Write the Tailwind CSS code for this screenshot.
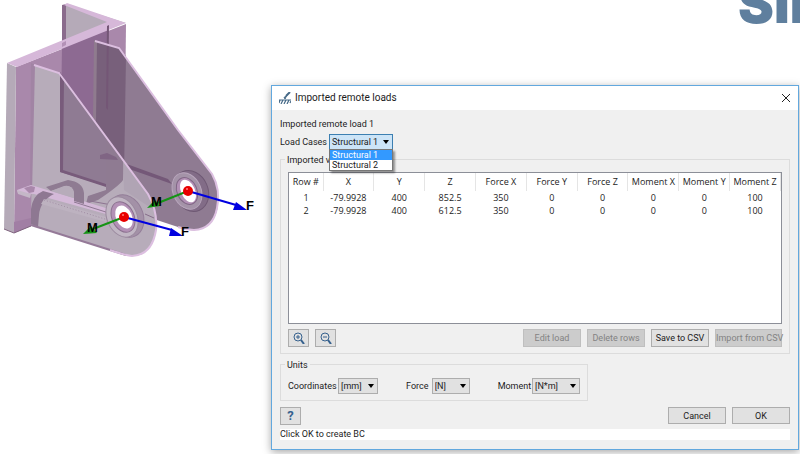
<!DOCTYPE html>
<html lang="en">
<head>
    <meta charset="UTF-8">
    <meta name="viewport" content="width=device-width, initial-scale=1.0">
    <title>Imported remote loads</title>
    <script src="https://cdn.jsdelivr.net/npm/@tailwindcss/browser@4"></script>
</head>
<body class="relative min-h-screen overflow-hidden bg-white font-['Roboto','Noto_Sans',sans-serif] text-[9px] leading-3 text-[#1c1c1c]">

    <!-- Viewport: bracket model -->
    <main>
        <svg class="block h-[264px] w-[264px]" viewBox="0 0 264 264" role="img" aria-label="Bracket with remote loads">
            <!-- back plates -->
            <path d="M66 4L126 23L107 25L66 41Z" fill="#b5aab8"/>
            <path d="M16 67L126 24L125 110L106 186L31 226L14 233Z" fill="#a988ab"/>
            <path d="M62 47L108 27L107 186L60 171Z" fill="#8d6a92"/>
            <path d="M7 63L16 67L14 233L4 229Z" fill="#b5aab8"/>
            <path d="M14 233L31 226L31 218L14 222Z" fill="#a17ea4"/>
            <path d="M4 229L14 233L31 226" fill="none" stroke="#80647f"/>
            <path d="M62 5L66 4L66 45L62 47Z" fill="#8a6b8c"/>
            <path d="M7 63L107 22L64 5L67 3L126 23L17 67Z" fill="#d6b8d9"/>
            <path d="M62 43L66 41L66 45L62 47Z" fill="#b391b6"/>

            <!-- rear gusset -->
            <path d="M95 40L119 48L178 130L212 174Q220 190 218 206Q214 229 195 230Q188 231 178 227L96 200Z" fill="#8f7b92"/>
            <path d="M96 41L119 48L126 56L124 176L96 183Z" fill="#78607b"/>
            <path d="M94 40L97 42L96 120L93 118Z" fill="#8f7b8e"/>
            <path d="M107 26L109 25L108 110L106 108Z" fill="#745676"/>
            <path d="M95 41L119 48L178 130L212 174Q221 190 217 208Q213 229 194 230Q186 230 178 227" fill="none" stroke="#dcbfe0" stroke-width="2"/>
            <path d="M97 154L124 163L168 179L172 184L98 158Z" fill="#745878"/>

            <!-- front gusset -->
            <path d="M33 65L59 73L148 194Q158 212 156 228Q152 255 132 256Q126 256 31 225Z" fill="#b7acba"/>
            <path d="M62 76L106 137L106 186L60 172Z" fill="#8f7b93"/>
            <path d="M106 137L124 161L123 180Q119 186 98 200L86 204L88 196L106 190Z" fill="#8f7b92"/>
            <path d="M60 72L64 78L63 170L106 184L106 187L60 172Z" fill="#785b7b"/>
            <path d="M100 155L107 153L116 157L118 160L100 159Z" fill="#806584"/>
            <path d="M31 63L35 65L32 193L30 193Z" fill="#a184a4"/>
            <path d="M123 160L149 196L154 210L124 190Z" fill="#b0a4b4"/>

            <!-- foot and cross tube -->
            <path d="M17 190L31 185L109 209L106 214L34 194L18 193Z" fill="#d4b9d8"/>
            <path d="M17 190L31 194L30 198L18 194Z" fill="#c4b7c7"/>
            <path d="M24 188L31 186L35 187L34 192L29 193Z" fill="#a988ab"/>
            <path d="M46 187L68 180Q83 182 84 193L84 204L74 201L74 193Q72 184 64 186L51 191Z" fill="#8f7b92"/>
            <path d="M51 191L66 186Q73 186 74 192L74 198Z" fill="#b7acba"/>
            <path d="M31 209Q33 195 43 191L54 194Q40 201 39 215L38 227L31 224Z" fill="#8e7892"/>
            <path d="M44 199L106 217L106 222L41 204Z" fill="#bdb2c0"/>
            <path d="M44 200L108 220" stroke="#a18da4" stroke-dasharray="1 2"/>
            <path d="M74 202L109 213" stroke="#8f7893"/>
            <path d="M90 201L112 205" stroke="#8d7491"/>
            <path d="M31 225L126 255" stroke="#957a98" stroke-width="2"/>
            <path d="M34 65L59 73L148 194Q158 212 156 230Q152 255 132 256Q128 256 110 250" fill="none" stroke="#dcbfe0" stroke-width="2"/>
            <path d="M145 214L154 218" stroke="#866d8a"/>

            <!-- bosses -->
            <g fill="none">
                <ellipse cx="191" cy="191" rx="17" ry="21" transform="rotate(-24 191 191)" fill="#826c87" stroke="#6f5974"/>
                <ellipse cx="187" cy="191" rx="14" ry="19" transform="rotate(-24 187 191)" fill="#a493a8" stroke="#b9a6bd"/>
                <ellipse cx="187" cy="191" rx="10" ry="14" transform="rotate(-24 187 191)" fill="#b391b6" stroke="#806685"/>
                <ellipse cx="188" cy="191" rx="7" ry="12" transform="rotate(-24 188 191)" fill="#fff"/>
                <ellipse cx="126" cy="216" rx="17" ry="22" transform="rotate(-24 126 216)" fill="#a391a7" stroke="#937d98"/>
                <ellipse cx="122" cy="217" rx="15" ry="21" transform="rotate(-24 122 217)" fill="#c1b6c4" stroke="#9b8a9f"/>
                <ellipse cx="123" cy="217" rx="11" ry="16" transform="rotate(-24 123 217)" fill="#b391b6" stroke="#8c7190"/>
                <ellipse cx="124" cy="217" rx="8" ry="12" transform="rotate(-24 124 217)" fill="#fff"/>
            </g>

            <!-- moment and force arrows -->
            <g stroke-width="2">
                <path d="M188 191L158 203" stroke="#159315"/>
                <path d="M147 208L155 200L160 206Z" fill="#159315"/>
                <path d="M188 191L236 205" stroke="#0000e0"/>
                <path d="M236 202L247 210L233 210Z" fill="#0000e0"/>
                <path d="M124 217L93 229" stroke="#159315"/>
                <path d="M83 234L91 226L97 233Z" fill="#159315"/>
                <path d="M124 217L172 230" stroke="#0000e0"/>
                <path d="M171 228L183 236L169 236Z" fill="#0000e0"/>
            </g>
            <g fill="#e80000">
                <circle cx="188" cy="191" r="5"/>
                <circle cx="124" cy="217" r="5"/>
            </g>
            <g fill="#ff7d7d">
                <circle cx="187" cy="189" r="1"/>
                <circle cx="123" cy="215" r="1"/>
            </g>
            <g class="font-['Liberation_Sans',sans-serif] text-[13px] font-bold" fill="#000">
                <text x="151" y="206">M</text>
                <text x="87" y="232">M</text>
                <text x="246" y="210">F</text>
                <text x="181" y="236">F</text>
            </g>
        </svg>
    </main>

    <!-- Brand, runs off the corner -->
    <div class="absolute -top-7 left-[738px] font-['Inter',sans-serif] text-[54px] leading-[64px] font-black text-[#5f7f9e]">SIM</div>

    <!-- Dialog -->
    <section role="dialog" aria-labelledby="dialog-title" class="absolute top-[85px] right-px left-[271px] border border-[#62a8de] bg-[#f0f0f0] shadow-[0_2px_8px_rgba(0,0,0,0.35)]">
        <header class="flex h-6 items-center bg-white pr-2 pl-[7px]">
            <svg class="h-3 w-3" viewBox="0 0 12 12" fill="none" stroke="#456987">
                <path d="M11 0L7 4" stroke-width="2"/>
                <path d="M8 3L6 7L5 5" fill="#456987"/>
                <path d="M0 8H12M1 8L0 11M4 8L2 12M7 8L5 12M10 8L8 12M12 9L11 11" stroke-width="1.2"/>
            </svg>
            <h1 id="dialog-title" class="ml-1 text-[10px]">Imported remote loads</h1>
            <button type="button" aria-label="Close" class="ml-auto">
                <svg class="h-2 w-2" viewBox="0 0 8 8" stroke="#222"><path d="M0 0L8 8M8 0L0 8"/></svg>
            </button>
        </header>

        <div class="px-2 pt-2 pb-[9px]">
            <p>Imported remote load 1</p>

            <div class="mt-1 flex items-center">
                <label for="load-case" class="w-[49px] whitespace-nowrap">Load Cases</label>
                <div class="relative">
                    <select id="load-case" class="block h-4 w-16 appearance-none border border-[#3c7fb1] bg-[#cce4f7] pl-[2px]">
                        <option>Structural 1</option>
                        <option>Structural 2</option>
                    </select>
                    <svg class="pointer-events-none absolute top-[6px] right-1 h-1 w-[6px]" viewBox="0 0 6 4"><path d="M0 0H6L3 4Z"/></svg>
                    <ul class="absolute top-[15px] left-0 z-10 w-16 border border-[#777] bg-white leading-[10px] shadow-[2px_2px_2px_rgba(0,0,0,0.4)]">
                        <li class="bg-[#3399ff] pl-[2px] text-white">Structural 1</li>
                        <li class="pl-[2px]">Structural 2</li>
                    </ul>
                </div>
            </div>

            <section class="relative mt-[9px] border border-[#dcdcdc] px-[7px] pt-3 pb-[6px]">
                <h2 class="absolute -top-[6px] left-1 bg-[#f0f0f0] px-[2px]">Imported values</h2>
                <div class="h-[152px] border border-[#8c8f98] bg-white">
                    <table class="w-full table-fixed text-center font-['Open_Sans','Noto_Sans',sans-serif]">
                        <thead>
                            <tr class="h-[18px] *:border-r *:border-[#e5e5e5] *:p-0 *:font-normal *:whitespace-nowrap">
                                <th class="w-[34px]">Row #</th>
                                <th>X</th>
                                <th>Y</th>
                                <th>Z</th>
                                <th>Force X</th>
                                <th>Force Y</th>
                                <th>Force Z</th>
                                <th>Moment X</th>
                                <th>Moment Y</th>
                                <th>Moment Z</th>
                            </tr>
                        </thead>
                        <tbody>
                            <tr class="h-[13px]"><td>1</td><td>-79.9928</td><td>400</td><td>852.5</td><td>350</td><td>0</td><td>0</td><td>0</td><td>0</td><td>100</td></tr>
                            <tr class="h-[13px]"><td>2</td><td>-79.9928</td><td>400</td><td>612.5</td><td>350</td><td>0</td><td>0</td><td>0</td><td>0</td><td>100</td></tr>
                        </tbody>
                    </table>
                </div>
                <div class="mt-[5px] flex gap-[6px]">
                    <button type="button" aria-label="Zoom in" class="flex h-[18px] w-[21px] items-center justify-center border border-[#adadad] bg-[#e1e1e1]">
                        <svg class="h-3 w-3" viewBox="0 0 12 12" fill="none" stroke="#36618e"><circle cx="5" cy="5" r="4"/><path d="M3 5H7M5 3V7"/><path d="M8 8L11 12" stroke-width="2"/></svg>
                    </button>
                    <button type="button" aria-label="Zoom out" class="flex h-[18px] w-[21px] items-center justify-center border border-[#adadad] bg-[#e1e1e1]">
                        <svg class="h-3 w-3" viewBox="0 0 12 12" fill="none" stroke="#36618e"><circle cx="5" cy="5" r="4"/><path d="M3 5H7"/><path d="M8 8L11 12" stroke-width="2"/></svg>
                    </button>
                    <button type="button" disabled class="ml-auto h-[18px] w-[58px] border border-[#bfbfbf] bg-[#cccccc] text-[#838383]">Edit load</button>
                    <button type="button" disabled class="h-[18px] w-[58px] border border-[#bfbfbf] bg-[#cccccc] text-[#838383]">Delete rows</button>
                    <button type="button" class="h-[18px] w-[58px] border border-[#adadad] bg-[#e1e1e1]">Save to CSV</button>
                    <button type="button" disabled class="h-[18px] w-[67px] border border-[#bfbfbf] bg-[#cccccc] whitespace-nowrap text-[#838383]">Import from CSV</button>
                </div>
            </section>

            <section class="relative mt-[10px] flex w-[308px] items-center border border-[#dcdcdc] px-[7px] pt-[13px] pb-[6px]">
                <h2 class="absolute -top-[6px] left-1 bg-[#f0f0f0] px-[2px]">Units</h2>
                <label for="unit-coordinates" class="w-[51px]">Coordinates</label>
                <div class="relative">
                    <select id="unit-coordinates" class="block h-4 w-10 appearance-none border border-[#adadad] bg-[#e1e1e1] pl-[2px]"><option>[mm]</option></select>
                    <svg class="pointer-events-none absolute top-[6px] right-1 h-1 w-[6px]" viewBox="0 0 6 4"><path d="M0 0H6L3 4Z"/></svg>
                </div>
                <label for="unit-force" class="ml-7 w-[26px]">Force</label>
                <div class="relative">
                    <select id="unit-force" class="block h-4 w-[38px] appearance-none border border-[#adadad] bg-[#e1e1e1] pl-[2px]"><option>[N]</option></select>
                    <svg class="pointer-events-none absolute top-[6px] right-1 h-1 w-[6px]" viewBox="0 0 6 4"><path d="M0 0H6L3 4Z"/></svg>
                </div>
                <label for="unit-moment" class="ml-7 w-[35px]">Moment</label>
                <div class="relative">
                    <select id="unit-moment" class="block h-4 w-12 appearance-none border border-[#adadad] bg-[#e1e1e1] pl-[2px]"><option>[N*m]</option></select>
                    <svg class="pointer-events-none absolute top-[6px] right-1 h-1 w-[6px]" viewBox="0 0 6 4"><path d="M0 0H6L3 4Z"/></svg>
                </div>
            </section>

            <footer class="mt-[6px]">
                <div class="flex gap-[6px]">
                    <button type="button" aria-label="Help" class="h-[18px] w-[21px] border border-[#adadad] bg-[#e1e1e1] text-[13px] font-bold text-[#36618e]">?</button>
                    <button type="button" class="ml-auto h-[17px] w-[58px] border border-[#adadad] bg-[#e1e1e1]">Cancel</button>
                    <button type="button" class="h-[17px] w-[58px] border border-[#adadad] bg-[#e1e1e1]">OK</button>
                </div>
                <p class="mt-1 bg-white leading-[11px]">Click OK to create BC</p>
            </footer>
        </div>
    </section>
</body>
</html>
